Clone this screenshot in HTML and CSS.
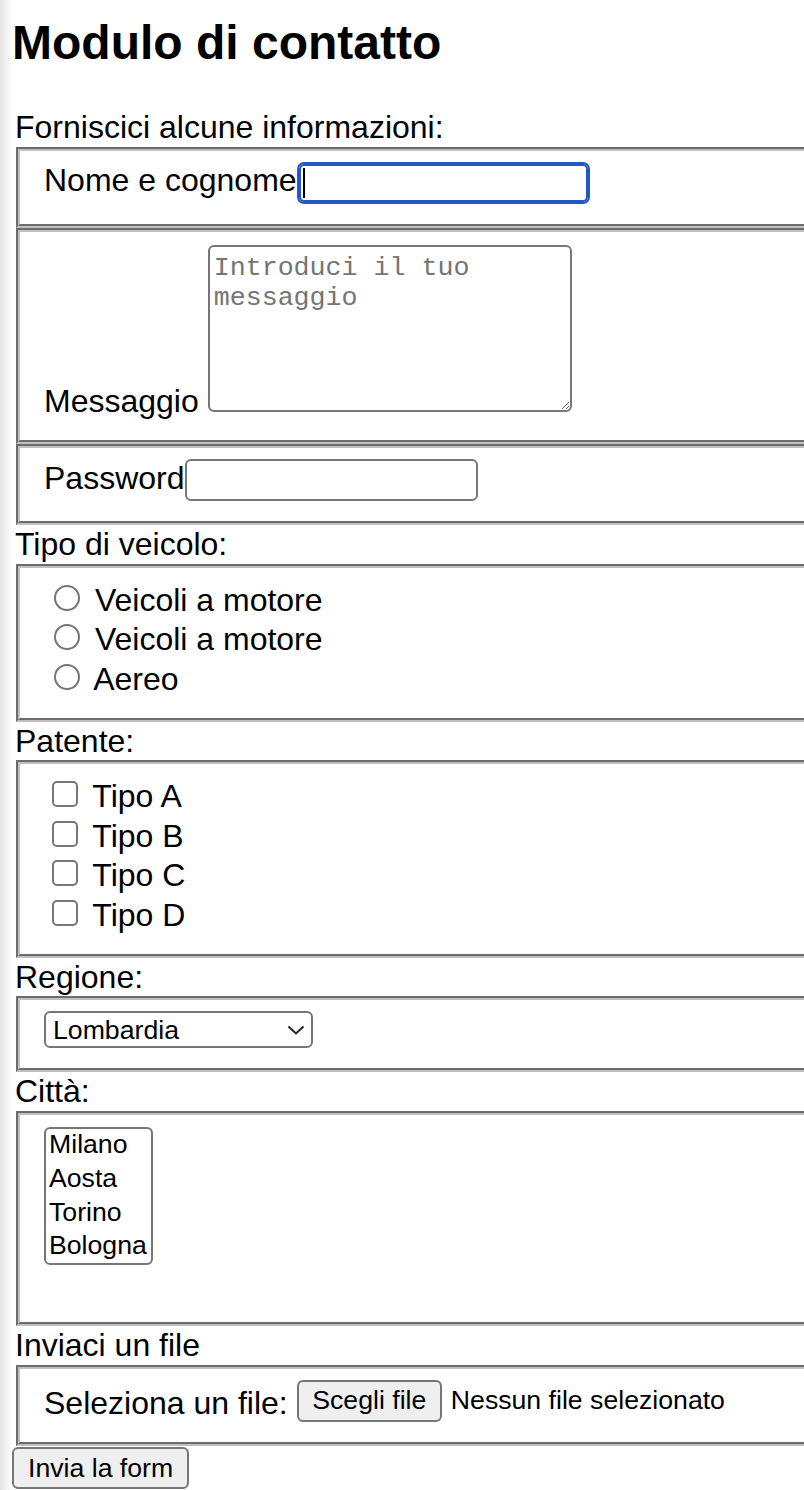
FILE: index.html
```html
<!DOCTYPE html>
<html lang="it">
<head>
<meta charset="utf-8">
<title>Modulo di contatto</title>
<link rel="stylesheet" href="styles.css">
</head>
<body>
<h2 class="title">Modulo di contatto</h2>
<form class="form" action="#" method="post">
  <div class="group-label">Forniscici alcune informazioni:</div>
  <fieldset class="box">
    <label class="field">Nome e cognome<input class="text-input is-focused" type="text" name="nome"></label>
  </fieldset>
  <fieldset class="box">
    <label class="field">Messaggio <textarea class="textarea" name="messaggio" placeholder="Introduci il tuo messaggio"></textarea></label>
  </fieldset>
  <fieldset class="box">
    <label class="field">Password<input class="text-input" type="password" name="password"></label>
  </fieldset>

  <div class="group-label">Tipo di veicolo:</div>
  <fieldset class="box">
    <label class="option"><input class="radio" type="radio" name="veicolo" value="motore1"> Veicoli a motore</label>
    <label class="option"><input class="radio" type="radio" name="veicolo" value="motore2"> Veicoli a motore</label>
    <label class="option"><input class="radio" type="radio" name="veicolo" value="aereo"> Aereo</label>
  </fieldset>

  <div class="group-label">Patente:</div>
  <fieldset class="box">
    <label class="option"><input class="check" type="checkbox" name="patente" value="A"> Tipo A</label>
    <label class="option"><input class="check" type="checkbox" name="patente" value="B"> Tipo B</label>
    <label class="option"><input class="check" type="checkbox" name="patente" value="C"> Tipo C</label>
    <label class="option"><input class="check" type="checkbox" name="patente" value="D"> Tipo D</label>
  </fieldset>

  <div class="group-label">Regione:</div>
  <fieldset class="box">
    <span class="select-wrap">
      <select class="select" name="regione">
        <option>Lombardia</option>
        <option>Piemonte</option>
        <option>Valle d'Aosta</option>
        <option>Emilia-Romagna</option>
      </select>
      <svg class="chevron" width="18" height="10" viewBox="0 0 18 10" aria-hidden="true"><path d="M1.5 1.5 L9 8.5 L16.5 1.5" fill="none" stroke="#222" stroke-width="2"/></svg>
    </span>
  </fieldset>

  <div class="group-label">Città:</div>
  <fieldset class="box">
    <select class="listbox" name="citta" multiple size="4">
      <option>Milano</option>
      <option>Aosta</option>
      <option>Torino</option>
      <option>Bologna</option>
    </select>
  </fieldset>

  <div class="group-label">Inviaci un file</div>
  <fieldset class="box">
    <label class="file-field">
      <span class="file-label">Seleziona un file:</span>
      <span class="file-btn">Scegli file</span>
      <span class="file-name">Nessun file selezionato</span>
    </label>
  </fieldset>

  <button class="submit" type="submit">Invia la form</button>
</form>
</body>
</html>
```

FILE: styles.css
```css
html {
  background: linear-gradient(to right, #e3e3e3 0, #f2f2f2 6px, #ffffff 14px);
}

body {
  margin: 15px 0 0 12px;
  font-family: "Liberation Sans", Arial, Helvetica, sans-serif;
  font-size: 32px;
  line-height: normal;
  color: #000;
  overflow: hidden;
}

.title {
  margin: 0 0 37px;
  font-size: 48px;
  line-height: 56px;
  font-weight: bold;
}

.form {
  margin: 0;
}

.group-label {
  line-height: 38.5px;
  padding-left: 3px;
}

.box {
  margin: 0 4px;
  padding: 11.2px 24px 20px;
  border: 4px groove #c0c0c0;
  width: 1000px;
  min-width: 0;
}

.text-input {
  box-sizing: border-box;
  width: 293px;
  height: 42px;
  margin: 0;
  padding: 0 4px;
  border: 2px solid #767676;
  border-radius: 6px;
  background: #fff;
  font-family: "Liberation Sans", Arial, sans-serif;
  font-size: 26.67px;
  color: #000;
  vertical-align: baseline;
  outline: none;
}

.text-input.is-focused {
  border-color: #2357c6;
  border-radius: 7px;
  box-shadow: inset 0 0 0 2px #2357c6;
  background: linear-gradient(#000, #000) 4px 50% / 2px 30px no-repeat #fff;
}

.textarea {
  box-sizing: border-box;
  width: 364px;
  height: 167px;
  margin: 2px 0 0;
  padding: 6px 4px 5px;
  border: 2px solid #767676;
  border-radius: 6px;
  background: #fff;
  font-family: "Liberation Mono", "Courier New", monospace;
  font-size: 26.67px;
  line-height: normal;
  vertical-align: baseline;
}

.textarea::placeholder {
  color: #757575;
}

.option {
  display: block;
  line-height: 36.6px;
}

.radio,
.check {
  appearance: none;
  -webkit-appearance: none;
  box-sizing: border-box;
  display: inline-block;
  width: 26px;
  height: 26px;
  border: 2px solid #767676;
  background: #fff;
  vertical-align: baseline;
}

.radio {
  margin: 6px 6px 0 10px;
  border-radius: 50%;
}

.check {
  margin: 6px 6px 0 8px;
  border-radius: 5px;
}

.select-wrap {
  position: relative;
  display: inline-block;
  vertical-align: top;
}

.select {
  appearance: none;
  -webkit-appearance: none;
  box-sizing: border-box;
  display: block;
  width: 269px;
  height: 36.8px;
  margin: 0;
  padding: 0 30px 0 7px;
  border: 2px solid #767676;
  border-radius: 6px;
  background: #fff;
  font-family: "Liberation Sans", Arial, sans-serif;
  font-size: 26.67px;
  color: #000;
}

.chevron {
  position: absolute;
  right: 8px;
  top: 14px;
  pointer-events: none;
}

.listbox {
  display: block;
  box-sizing: border-box;
  width: 109px;
  height: 138px;
  margin: 1px 0 37.5px;
  padding: 0;
  border: 2px solid #767676;
  border-radius: 6px;
  background: #fff;
  font-family: "Liberation Sans", Arial, sans-serif;
  font-size: 26.67px;
  color: #000;
  overflow: hidden;
  outline: none;
}

.listbox option {
  min-height: 0;
  padding: 0 3px 2.8px;
  color: #000;
}

.file-field {
  display: flex;
  align-items: flex-end;
}

.file-btn {
  box-sizing: border-box;
  height: 41.6px;
  margin-left: 9px;
  padding: 0 13.5px;
  border: 2px solid #767676;
  border-radius: 6px;
  background: #efefef;
  font-size: 26.67px;
  line-height: 37.6px;
  white-space: nowrap;
}

.file-name {
  align-self: center;
  margin-left: 9px;
  font-size: 26.67px;
  white-space: nowrap;
}

.submit {
  display: block;
  box-sizing: border-box;
  height: 41.6px;
  margin: 1.5px 0 0;
  padding: 0 14px;
  border: 2px solid #767676;
  border-radius: 6px;
  background: #efefef;
  font-family: "Liberation Sans", Arial, sans-serif;
  font-size: 26.67px;
  color: #000;
}
```
